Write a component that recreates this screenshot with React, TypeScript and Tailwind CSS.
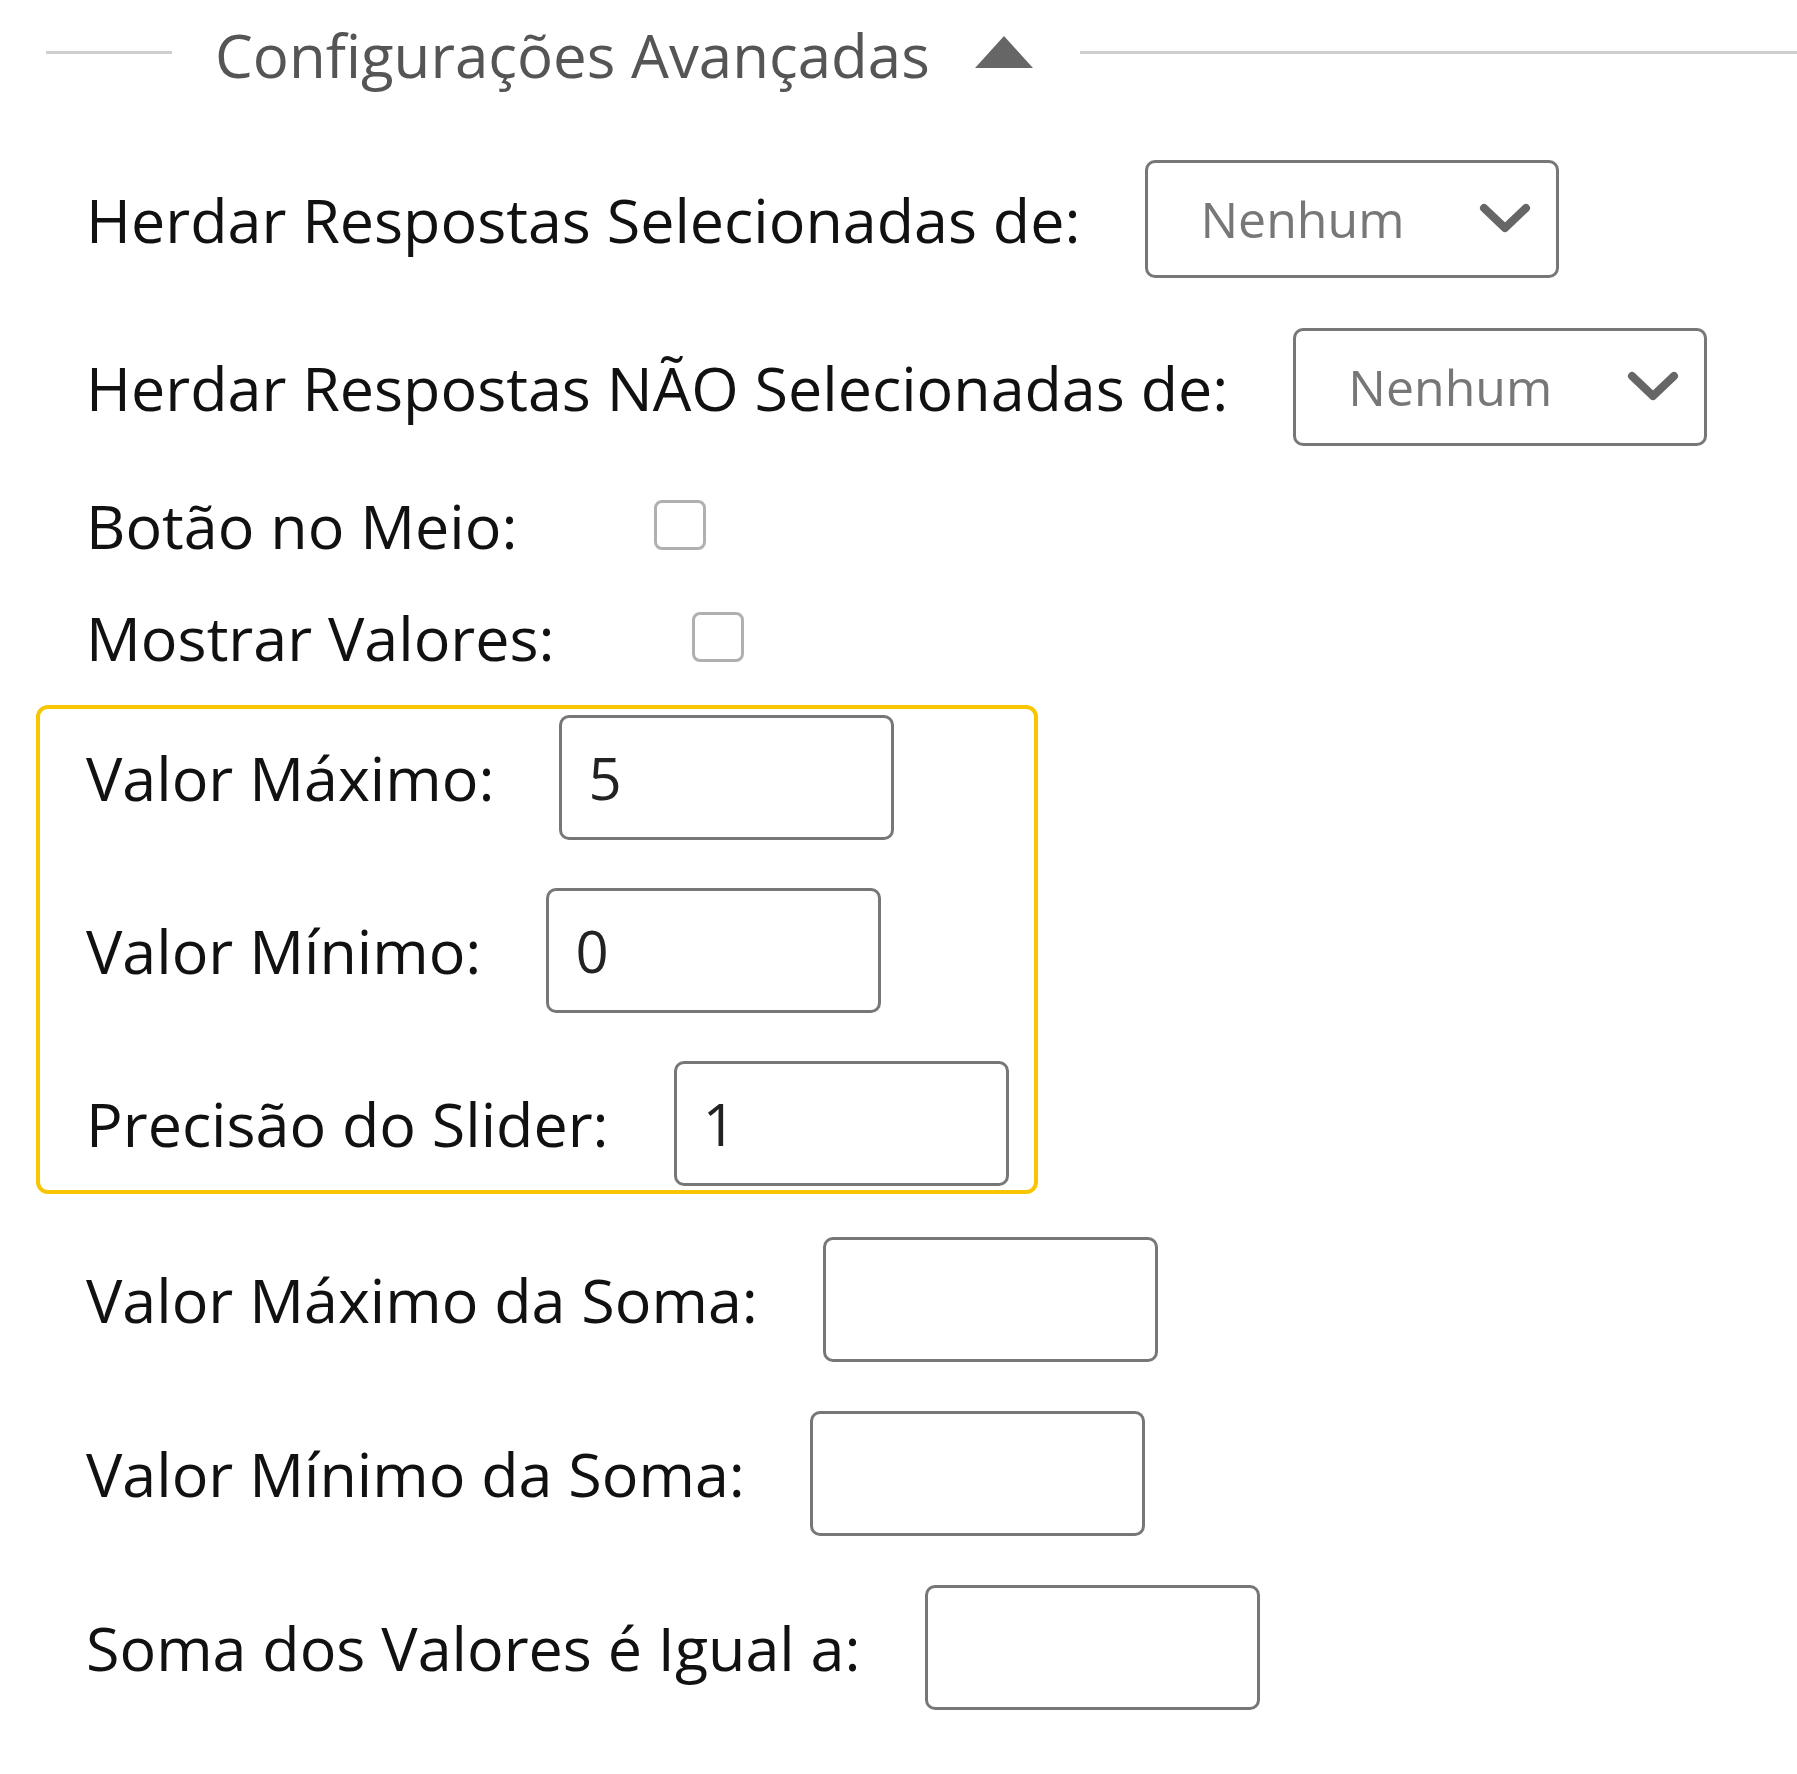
import React from "react";

function Chevron() {
  return (
    <svg width="54" height="34" viewBox="0 0 54 34" className="shrink-0">
      <polyline points="6,6 27,26 48,6" fill="none" stroke="#666666" strokeWidth="8" strokeLinecap="round" strokeLinejoin="round" />
    </svg>
  );
}

function SelectRow({ label }: { label: string }) {
  return (
    <div className="flex items-center h-[118px]">
      <span className="text-[#111] whitespace-nowrap">{label}</span>
      <div className="ml-[65px] w-[414px] h-[118px] shrink-0 border-[3px] border-[#777777] rounded-[10px] flex items-center justify-between pl-[52px] pr-[24px]">
        <span className="text-[50px] text-[#777777]">Nenhum</span>
        <Chevron />
      </div>
    </div>
  );
}

function CheckRow({ label, mt }: { label: string; mt: string }) {
  return (
    <div className={`flex items-center h-[50px] ${mt}`}>
      <span className="text-[#111] whitespace-nowrap">{label}</span>
      <input
        type="checkbox"
        readOnly
        className="appearance-none ml-[137px] w-[52px] h-[50px] shrink-0 border-[3px] border-[#b0b0b0] rounded-[8px] bg-white"
      />
    </div>
  );
}

function InputRow({ label, value }: { label: string; value: string }) {
  return (
    <div className="flex items-center h-[125px]">
      <span className="text-[#111] whitespace-nowrap">{label}</span>
      <input
        type="text"
        readOnly
        value={value}
        className="ml-[65px] w-[335px] h-[125px] shrink-0 border-[3px] border-[#777777] rounded-[10px] pl-[26px] text-[58px] text-[#222] bg-white outline-none"
      />
    </div>
  );
}

export default function App() {
  return (
    <div className="w-[1797px] min-h-[1774px] bg-white font-['Open_Sans',sans-serif] text-[61px] leading-none overflow-hidden">
      <div className="flex items-center h-[104px]">
        <div className="ml-[46px] w-[126px] h-[3px] bg-[#cfcfcf] shrink-0" />
        <span className="ml-[43px] mt-[6px] text-[60px] text-[#555555] whitespace-nowrap">Configurações Avançadas</span>
        <svg width="60" height="34" viewBox="0 0 60 34" className="ml-[44px] shrink-0">
          <polygon points="30,1 59,33 1,33" fill="#666666" />
        </svg>
        <div className="ml-[46px] flex-1 h-[3px] bg-[#cfcfcf]" />
      </div>

      <div className="pl-[86px] flex flex-col">
        <div className="mt-[56px]">
          <SelectRow label="Herdar Respostas Selecionadas de:" />
        </div>
        <div className="mt-[50px]">
          <SelectRow label="Herdar Respostas NÃO Selecionadas de:" />
        </div>
        <CheckRow label="Botão no Meio:" mt="mt-[54px]" />
        <CheckRow label="Mostrar Valores:" mt="mt-[62px]" />

        <div className="mt-[43px] -ml-[50px] w-[1002px] border-[4px] border-[#f8c600] rounded-[12px] pl-[46px] pt-[6px] pb-[4px] flex flex-col gap-[48px]">
          <InputRow label="Valor Máximo:" value="5" />
          <InputRow label="Valor Mínimo:" value="0" />
          <InputRow label="Precisão do Slider:" value="1" />
        </div>

        <div className="mt-[43px] flex flex-col gap-[49px]">
          <InputRow label="Valor Máximo da Soma:" value="" />
          <InputRow label="Valor Mínimo da Soma:" value="" />
          <InputRow label="Soma dos Valores é Igual a:" value="" />
        </div>
      </div>
    </div>
  );
}
